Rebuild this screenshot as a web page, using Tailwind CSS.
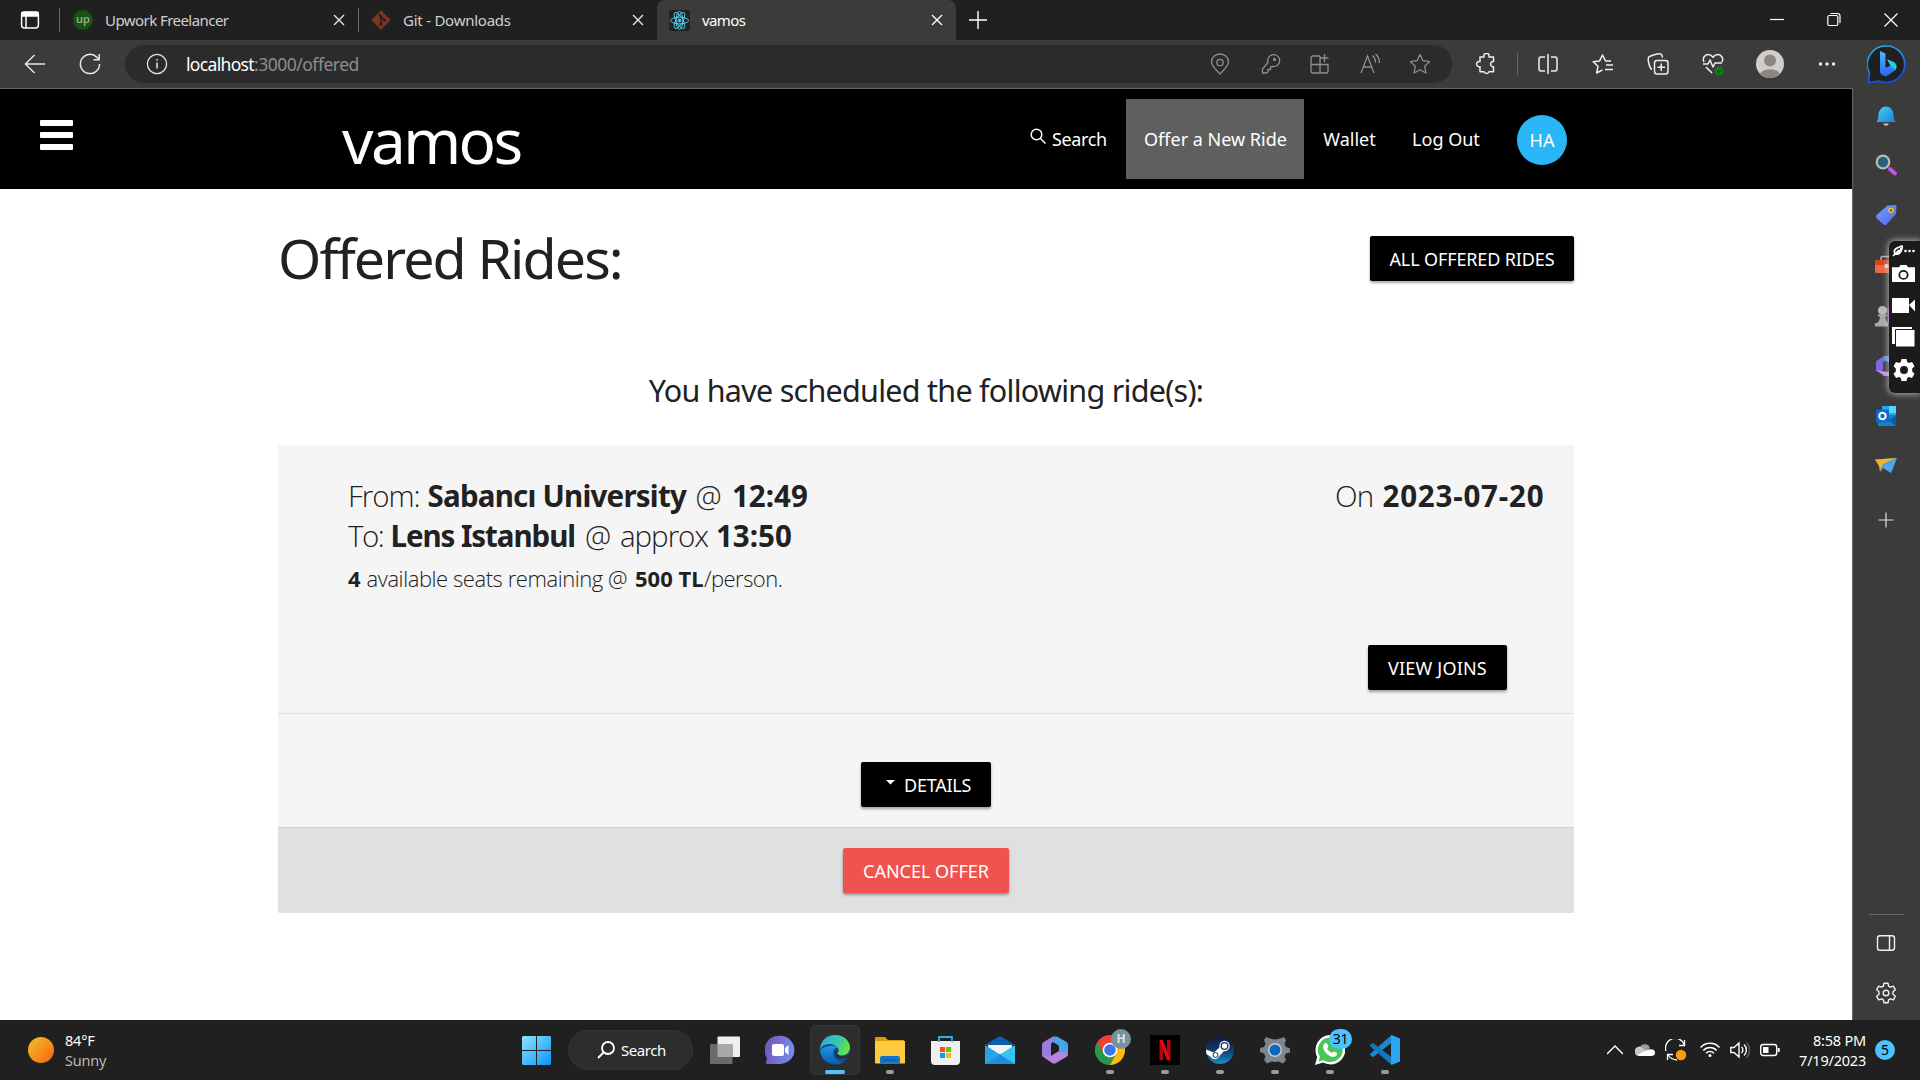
<!DOCTYPE html>
<html lang="en">
<head>
<meta charset="utf-8">
<title>vamos</title>
<script src="https://cdn.jsdelivr.net/npm/@tailwindcss/browser@4"></script>
</head>
<body class="w-[1920px] h-[1080px] overflow-hidden bg-white font-['Noto_Sans','Open_Sans',sans-serif] whitespace-nowrap">
<div class="relative flex h-[1080px] w-[1920px] flex-col">

<!-- Tab strip -->
<div class="flex h-10 shrink-0 items-center bg-[#202020] text-[15px] leading-5 text-[#d0d0d0]">
  <svg class="ml-5 size-5 shrink-0" viewBox="0 0 20 20" fill="none" stroke="#fff" stroke-width="1.5"><rect x="1.6" y="2" width="16.8" height="16" rx="3"/><path d="M2 2.5h16v3.5H2z" fill="#fff"/><path d="M6 6v12"/></svg>
  <div class="ml-[19px] h-6 w-px bg-[#6a6a6a]"></div>
  <div class="flex w-[298px] items-center pl-[13px]">
    <div class="flex size-5 shrink-0 items-center justify-center rounded-full bg-[#14540f] text-[11px] leading-none text-[#97ab92]"><span class="-mt-[3px] font-semibold">up</span></div>
    <span class="-mt-px ml-3 w-[227px] tracking-[-0.037em]">Upwork Freelancer</span>
    <svg class="size-[14px] shrink-0" viewBox="0 0 14 14" stroke="#e8e8e8" stroke-width="1.4"><path d="M2 2l10 10M12 2L2 12"/></svg>
  </div>
  <div class="h-6 w-px bg-[#6a6a6a]"></div>
  <div class="flex w-[298px] items-center pl-3">
    <svg class="size-5 shrink-0" viewBox="0 0 20 20"><path d="M10 .3 19.7 10 10 19.7.3 10z" fill="#7b3426"/><path d="M7.5 3.5l2.5 3v9M10 7l4 3.5" stroke="#202020" stroke-width="1.4" fill="none"/><circle cx="10" cy="7" r="1.5" fill="#202020"/><circle cx="10" cy="14" r="1.6" fill="#202020"/><circle cx="13.7" cy="10.3" r="1.5" fill="#202020"/></svg>
    <span class="-mt-px ml-3 w-[228px] tracking-[-0.016em]">Git - Downloads</span>
    <svg class="size-[14px] shrink-0" viewBox="0 0 14 14" stroke="#e8e8e8" stroke-width="1.4"><path d="M2 2l10 10M12 2L2 12"/></svg>
  </div>
  <div class="flex h-10 w-[299px] items-center rounded-t-lg bg-[#3b3b3b] pl-3 text-white">
    <svg class="size-[21px] shrink-0" viewBox="0 0 20 20" fill="none" stroke="#5cc8e4" stroke-width=".9"><rect width="20" height="20" rx="2" fill="#222" stroke="none"/><ellipse cx="10" cy="10" rx="8.6" ry="3.2" transform="rotate(90 10 10)" /><ellipse cx="10" cy="10" rx="8.6" ry="3.2"/><ellipse cx="10" cy="10" rx="8.6" ry="3.2" transform="rotate(60 10 10)"/><ellipse cx="10" cy="10" rx="8.6" ry="3.2" transform="rotate(120 10 10)"/><circle cx="10" cy="10" r="1.4" fill="#5cc8e4"/></svg>
    <span class="-mt-px ml-3 w-[228px] tracking-[-0.04em]">vamos</span>
    <svg class="size-[14px] shrink-0" viewBox="0 0 14 14" stroke="#fff" stroke-width="1.4"><path d="M2 2l10 10M12 2L2 12"/></svg>
  </div>
  <svg class="ml-3 size-5 shrink-0" viewBox="0 0 20 20" stroke="#fff" stroke-width="1.4"><path d="M10 1v18M1 10h18"/></svg>
  <div class="ml-auto flex items-center pr-[22px]">
    <svg class="w-[14px] h-5" viewBox="0 0 14 20" stroke="#fff" stroke-width="1.2"><path d="M0 9.5h14"/></svg>
    <svg class="ml-[43px] w-[14px] h-5" viewBox="0 0 14 20" fill="none" stroke="#fff" stroke-width="1.2"><rect x=".8" y="5.5" width="10" height="10" rx="1.5"/><path d="M3.500 3.500h7q2.500 0 2.500 2.500v7"/></svg>
    <svg class="ml-[43px] w-[14px] h-5" viewBox="0 0 14 20" stroke="#fff" stroke-width="1.2"><path d="M.5 3.500l13 13M13.500 3.500l-13 13"/></svg>
  </div>
</div>

<!-- Address toolbar -->
<div class="flex h-12 shrink-0 items-center bg-[#3b3b3b]">
  <svg class="ml-6 size-[22px] shrink-0" viewBox="0 0 22 22" fill="none" stroke="#e6e6e6" stroke-width="1.5"><path d="M21 11H2M10.500 2L1.500 11l9 9"/></svg>
  <svg class="ml-[33px] size-[22px] shrink-0" viewBox="0 0 22 22" fill="none" stroke="#e6e6e6" stroke-width="1.5"><path d="M20.600 11a9.600 9.600 0 1 1-2.900-6.900L20 6.500M20.200 1v5.800h-5.800"/></svg>
  <div class="ml-6 flex h-[38px] w-[1327px] items-center rounded-full bg-[#2b2b2b]">
    <svg class="ml-[21px] size-[22px] shrink-0" viewBox="0 0 22 22" fill="none" stroke="#e6e6e6" stroke-width="1.3"><circle cx="11" cy="11" r="9.600"/><path d="M11 9.500v6M11 6v1.600" stroke-width="1.500"/></svg>
    <div class="ml-[18px] w-[1023px] shrink-0 text-[17.500px] leading-6 text-[#8e8e8e]"><span class="tracking-[-0.038em] text-white">localhost</span><span class="tracking-[-0.028em]">:3000/offered</span></div>
    <div class="flex shrink-0 items-center gap-7 text-[#8f8f8f]">
      <svg class="size-[22px]" viewBox="0 0 22 22" fill="none" stroke="currentColor" stroke-width="1.300"><path d="M11 21C6 16 2.500 12.500 2.500 9a8.500 8 0 0 1 17 0c0 3.500-3.500 7-8.500 12z"/><circle cx="11" cy="9.500" r="3.200"/></svg>
      <svg class="size-[22px]" viewBox="0 0 22 22" fill="none" stroke="currentColor" stroke-width="1.300"><path d="M8.500 10.500a6 6 0 1 1 4.500 4l-2 .5v2.500H8.500V20L7 21H3v-4z" transform="translate(.5 -1)"/><circle cx="15.500" cy="6.500" r="1"/></svg>
      <svg class="size-[22px]" viewBox="0 0 22 22" fill="none" stroke="currentColor" stroke-width="1.300"><path d="M11 3H4a2 2 0 0 0-2 2v13a2 2 0 0 0 2 2h13a2 2 0 0 0 2-2v-6.500H2M11 3v17M15.500 1v8M11.500 5h8"/></svg>
      <svg class="size-[22px]" viewBox="0 0 22 22" fill="none" stroke="currentColor" stroke-width="1.300"><path d="M2 20L8.500 3 15 20M4.300 14h8.400M13.500 2.500a9 9 0 0 1 3 7M16.500 1a12 12 0 0 1 4 9"/></svg>
      <svg class="size-[22px]" viewBox="0 0 22 22" fill="none" stroke="currentColor" stroke-width="1.300" stroke-linejoin="round"><path d="M11 1.500l2.900 6.200 6.800.9-5 4.700 1.300 6.700-6-3.300L5 20l1.300-6.700-5-4.700 6.800-.9z"/></svg>
    </div>
  </div>
  <svg class="ml-6 size-[22px] shrink-0" viewBox="0 0 22 22" fill="none" stroke="#f0f0f0" stroke-width="1.500" stroke-linejoin="round"><path d="M4 4h4a2.700 2.700 0 1 1 5 0h4.500v4.500h-1a2.700 2.700 0 0 0 0 5.200h1v5H13a2.700 2.700 0 0 1-5 0H4v-5a2.700 2.700 0 1 1 0-5.200z"/></svg>
  <div class="ml-[19px] h-[22px] w-px bg-[#6a6a6a]"></div>
  <div class="ml-[19px] flex shrink-0 items-center gap-[33px]">
    <svg class="size-[22px]" viewBox="0 0 22 22" fill="none" stroke="#f0f0f0" stroke-width="1.500"><path d="M8 4H4a2 2 0 0 0-2 2v10a2 2 0 0 0 2 2h4M14 4h4a2 2 0 0 1 2 2v10a2 2 0 0 1-2 2h-4M11 1v20"/></svg>
    <svg class="size-[22px]" viewBox="0 0 22 22" fill="none" stroke="#f0f0f0" stroke-width="1.500" stroke-linejoin="round"><path d="M19 8h-5.500L10.500 2 7.600 7.900l-6.400.9L6 13.200 4.700 20l5.800-3.100M14 12h7M13 16.500h8"/></svg>
    <svg class="size-[22px]" viewBox="0 0 22 22" fill="none" stroke="#f0f0f0" stroke-width="1.500"><rect x="7.500" y="7.500" width="13.500" height="13.500" rx="2.500"/><path d="M14.200 10.500v7.500M10.500 14.200H18M4.800 16.500C2.500 15 .5 6.500 1.500 4.500S12 0 14 1.200c.8.600 1.300 2 1.500 3.300"/></svg>
    <svg class="size-[22px]" viewBox="0 0 22 22" fill="none" stroke="#f0f0f0" stroke-width="1.500" stroke-linejoin="round"><path d="M2 9C0 5 3 1.500 6 1.500c2.500 0 4 1.300 5 2.700 1-1.400 2.500-2.700 5-2.700 3 0 6 3.500 4 7.500M1 11h5l2-4 3 7 2-4h7M4 14l6 6"/><circle cx="17" cy="18" r="4.500" fill="#137a1b" stroke="none"/><path d="M15 18l1.500 1.500L19 16.800" stroke="#0b4d10" stroke-width="1.200"/></svg>
  </div>
  <svg class="ml-8 size-7 shrink-0" viewBox="0 0 28 28"><circle cx="14" cy="14" r="14" fill="#d0cecb"/><circle cx="14" cy="10.500" r="6" fill="#8b8680"/><path d="M4 24a10.500 7 0 0 1 20 0 14 14 0 0 1-20 0z" fill="#8b8680"/></svg>
  <svg class="ml-[34px] h-5 w-[18px] shrink-0" viewBox="0 0 18 20" fill="#f0f0f0"><circle cx="2.500" cy="10" r="1.700"/><circle cx="9" cy="10" r="1.700"/><circle cx="15.500" cy="10" r="1.700"/></svg>
</div>

<!-- Page and Edge sidebar -->
<div class="flex h-[932px] shrink-0">
  <div class="w-[1852px] border-t border-[#666]">
    <nav class="flex h-[100px] bg-black text-[18px] text-white">
      <div class="ml-10 mt-[31px] flex h-[30px] w-[33px] flex-col justify-between">
        <div class="h-[6px] rounded-[1px] bg-white"></div><div class="h-[6px] rounded-[1px] bg-white"></div><div class="h-[6px] rounded-[1px] bg-white"></div>
      </div>
      <div class="ml-[269px] w-[669px] text-[62px] leading-[103px] tracking-[-0.041em]">vamos</div>
      <div class="mt-2.5 flex h-20 items-center leading-[80px]">
        <div class="flex w-[115px] items-center pl-[19px]">
          <svg class="-mt-1.5 size-4 shrink-0" viewBox="0 0 16 16" fill="none" stroke="#fff" stroke-width="1.500"><circle cx="6.500" cy="6.500" r="5.300"/><path d="M10.500 10.500L15.500 15.500"/></svg>
          <span class="ml-[6px] tracking-[-0.02em]">Search</span>
        </div>
        <div class="w-[178px] bg-[#5f5f5f] pl-[1px] text-center">Offer a New Ride</div>
        <div class="w-[89px] pl-[2px] text-center">Wallet</div>
        <div class="w-[104px] pl-[2px] text-center">Log Out</div>
        <div class="mt-[2px] ml-5 size-[50px] rounded-full bg-[#29b6f6] text-center leading-[51px]">HA</div>
      </div>
    </nav>
    <main class="ml-[278px] w-[1296px] text-[#212121]">
      <div class="flex h-[134px] items-start justify-between pt-[47px]">
        <h2 class="text-[55.500px] leading-[43px] font-[370] tracking-[-0.034em]">Offered Rides:</h2>
        <div class="h-[45px] w-[204px] rounded-xs bg-black text-center text-[18px] leading-[46px] tracking-[-0.007em] text-white shadow-[0_2px_3px_rgba(0,0,0,0.35)]">ALL OFFERED RIDES</div>
      </div>
      <h4 class="h-[122px] pt-[45px] text-center text-[30.500px] leading-[45px] tracking-[-0.024em]">You have scheduled the following ride(s):</h4>
      <section class="h-[468px] rounded-xs bg-[#f5f5f5]">
        <div class="flex h-[269px] justify-between border-b border-[#e0e0e0] pl-[70px]">
          <div class="pt-[31px] text-[29.500px] leading-[40px]">
            <div class="flex font-['Open_Sans'] font-light">
              <span class="w-[79.500px] tracking-[-0.035em]">From:</span><b class="w-[268px] font-['Noto_Sans'] font-bold tracking-[-0.026em]">Sabancı University</b><span class="w-[36.500px]">@</span><b class="font-['Noto_Sans'] font-bold">12:49</b>
            </div>
            <div class="flex font-['Open_Sans'] font-light">
              <span class="w-[42.500px] tracking-[-0.050em]">To:</span><b class="w-[194.500px] font-['Noto_Sans'] font-bold tracking-[-0.036em]">Lens Istanbul</b><span class="w-[35px]">@</span><span class="w-[96px] tracking-[-0.035em]">approx</span><b class="font-['Noto_Sans'] font-bold">13:50</b>
            </div>
            <div class="flex pt-px font-['Open_Sans'] text-[22px] leading-[42px] font-light">
              <b class="w-[18.500px] font-['Noto_Sans'] font-bold">4</b><span class="w-[268.500px] tracking-[-0.020em]">available seats remaining @</span><b class="w-[69px] font-['Noto_Sans'] font-bold">500 TL</b><span class="tracking-[-0.024em]">/person.</span>
            </div>
          </div>
          <div class="flex flex-col justify-between pt-[31px] pb-[23px]">
            <div class="flex w-[239px] text-[29.500px] leading-[40px]"><span class="w-[47.500px] font-['Open_Sans'] font-light tracking-[-0.030em]">On</span><b class="font-bold tracking-[0.027em]">2023-07-20</b></div>
            <div class="ml-[33px] h-[45px] w-[139px] rounded-xs bg-black text-center text-[18px] leading-[46px] tracking-[0.01em] text-white shadow-[0_2px_3px_rgba(0,0,0,0.35)]">VIEW JOINS</div>
          </div>
        </div>
        <div class="flex h-[113px] justify-center pt-12">
          <div class="flex h-[45px] w-[130px] items-center rounded-xs bg-black pl-[25px] text-[18px] leading-[45px] tracking-[-0.013em] text-white shadow-[0_2px_3px_rgba(0,0,0,0.35)]"><svg class="-mt-[5px] mr-[9px] h-[5px] w-[9px]" viewBox="0 0 9 5"><path d="M0 0h9L4.500 4.500z" fill="#fff"/></svg><span class="pt-px">DETAILS</span></div>
        </div>
        <div class="flex h-[86px] justify-center rounded-b-xs border-t border-[#d2d2d2] bg-[#e0e0e0] pt-5">
          <div class="h-[45px] w-[166px] rounded-xs bg-[#ef5350] text-center text-[18px] leading-[46px] text-white shadow-[0_2px_3px_rgba(0,0,0,0.35)]">CANCEL OFFER</div>
        </div>
      </section>
    </main>
  </div>

  <aside class="flex w-[68px] flex-col items-center border-l border-[#666] bg-[#3b3b3b] pt-[17px] pr-px">
    <svg class="size-[22px]" viewBox="0 0 22 22"><defs><linearGradient id="bell" x2="1" y2="1"><stop stop-color="#45d2f7"/><stop offset="1" stop-color="#1b7fe0"/></linearGradient></defs><path d="M3.500 10a7.500 8.500 0 0 1 15 0l.5 4 1.500 3h-19L3 14z" fill="url(#bell)"/><path d="M8 18.500h6q-3 4.500-6 0z" fill="#c9c9c9"/></svg>
    <svg class="mt-[27px] size-[22px]" viewBox="0 0 22 22"><path d="M15 15l5 4.500" stroke="#c452ea" stroke-width="4" stroke-linecap="round"/><circle cx="8" cy="8" r="6.300" fill="#27607e" stroke="#bcb8b4" stroke-width="2.200"/></svg>
    <svg class="mt-[28px] size-[22px]" viewBox="0 0 22 22"><defs><linearGradient id="tag" x2="1" y2="1"><stop stop-color="#6fa2ff"/><stop offset="1" stop-color="#5561ec"/></linearGradient></defs><path d="M12.500 1.500L20 1q1.500 0 1.500 1.500l-.5 7.500-9.500 10.500q-1.500 1-3 0L1.500 14q-1.200-1.500 0-3z" fill="url(#tag)"/><circle cx="16" cy="6.500" r="2.700" fill="#f5c514"/><circle cx="16" cy="6.500" r="1.200" fill="#555"/></svg>
    <svg class="mt-[29px] size-[22px]" viewBox="0 0 22 22"><path d="M6 7V3q0-1.500 1.500-1.500h8V7" fill="none" stroke="#b4b4b4" stroke-width="1.500"/><rect y="5" width="22" height="13" rx="1.500" fill="#f0663f"/><rect y="5" width="22" height="5" fill="#d4451c"/><circle cx="11.500" cy="11" r="2.300" fill="#d4d4d4"/></svg>
    <svg class="mt-[28px] size-[22px]" viewBox="0 0 22 22"><path d="M12 3l5-2v18h-4z" fill="#9c4fd0"/><circle cx="7.500" cy="5.500" r="4.500" fill="#b8b8b8"/><path d="M3 9.500h9v2H10q.5 4 3 6.500v3.500H0V18h2.500q2.500-2.500 2.500-6.500H3z" fill="#a8a8a8"/></svg>
    <svg class="mt-[28px] size-[22px]" viewBox="0 0 22 22"><path d="M9 1L2 5.500Q1 6.200 1 7.500V16l4 1 3-2V7l6-4z" fill="#7b67df"/><path d="M9 1h4l8 5v8l-6-3V8L9 5z" fill="#4c9ce8"/><path d="M1 15l8 6h4l8-5v-3l-8 4z" fill="#c08de0"/></svg>
    <svg class="mt-[28px] size-[22px]" viewBox="0 0 22 22"><path d="M7 1h14v15H7z" fill="#2aa7ea"/><path d="M14 1h7v7h-7z" fill="#50d9ff"/><path d="M3 10l18 0v11H3z" fill="#1283d0"/><path d="M21 10l-7 5.500 7 5.500z" fill="#0a5ea8"/><rect x="1" y="4.500" width="13" height="13" rx="1" fill="#0f6cc4"/><circle cx="7.500" cy="11" r="3.200" fill="none" stroke="#fff" stroke-width="2"/></svg>
    <svg class="mt-[28px] size-[22px]" viewBox="0 0 22 22"><path d="M0 4.500L22 3 6 12z" fill="#3ba4e8"/><path d="M0 4.500L22 3 8 9l-3 8-1-6z" fill="#f3b51d"/><path d="M22 3L16 18l-8-5-2 4 1-6z" fill="#4aa8f2"/></svg>
    <svg class="mt-[35px] size-4" viewBox="0 0 16 16" stroke="#e0e0e0" stroke-width="1.200"><path d="M8 .5v15M.5 8h15"/></svg>
    <div class="mt-auto h-px w-[35px] bg-[#6a6a6a]"></div>
    <svg class="mt-[17px] size-[22px]" viewBox="0 0 22 22" fill="none" stroke="#f0f0f0" stroke-width="1.400"><rect x="2.500" y="3.800" width="17" height="14.500" rx="2.500"/><path d="M14.500 4v14"/></svg>
    <svg class="mt-[28px] mb-[16px] size-[22px]" viewBox="0 0 22 22" fill="none" stroke="#f0f0f0" stroke-width="1.400" stroke-linejoin="round"><path d="M9 1.200h4l.6 3 1.800 1 2.900-1 2 3.500-2.300 2v2.600l2.300 2-2 3.500-2.900-1-1.800 1-.6 3H9l-.6-3-1.800-1-2.900 1-2-3.500 2.300-2V9.700l-2.300-2 2-3.500 2.900 1 1.800-1z"/><circle cx="11" cy="11" r="2.800"/></svg>
  </aside>
</div>

<!-- Taskbar -->
<div class="flex h-[60px] shrink-0 items-center bg-[#202020] text-white">
  <div class="ml-7 size-[26px] rounded-full bg-linear-to-br from-[#efc12d] to-[#f2600c]"></div>
  <div class="ml-[11px] w-[443px] text-[14.500px] leading-5 tracking-[-0.014em]"><div>84°F</div><div class="text-[#b8b8b8]">Sunny</div></div>
  <svg class="ml-[14px] size-[29px] shrink-0" viewBox="0 0 29 29"><defs><linearGradient id="win" x2="1" y2="1"><stop stop-color="#8ae4ff"/><stop offset="1" stop-color="#0a94f8"/></linearGradient></defs><path d="M1 0h13v14H0V1zM15 0h13l1 1v13H15zM0 15h14v14H1l-1-1zM15 15h14v13l-1 1H15z" fill="url(#win)"/></svg>
  <div class="ml-[17px] flex h-10 w-[125px] shrink-0 items-center rounded-full border border-[#343434] bg-[#2d2d2d] pl-[28px]">
    <svg class="size-[18px]" viewBox="0 0 18 18" fill="none" stroke="#fff" stroke-width="1.800"><circle cx="11" cy="7" r="6"/><path d="M6.500 11.500L1 17"/></svg>
    <span class="ml-[6px] text-[15px] tracking-[-0.030em]">Search</span>
  </div>
  <div class="ml-[4.500px] grid h-[60px] w-[715px] shrink-0 grid-cols-13 items-center justify-items-center">
    <svg class="h-[28px] w-[30px]" viewBox="0 0 30 28"><rect x="7.500" y=".5" width="22.500" height="20.500" rx="1" fill="#efefef"/><rect y="8" width="22.500" height="20" rx="1" fill="#6b6b6b"/><path d="M7.500 8h15v13h-15z" fill="#a9a9a9"/></svg>
    <svg class="size-[30px]" viewBox="0 0 30 30"><defs><linearGradient id="chat" x1="0" y1=".4" x2="1" y2=".6"><stop stop-color="#7157b8"/><stop offset="1" stop-color="#7391ec"/></linearGradient></defs><path d="M15 .8A14.300 14 0 0 1 15 29L.8 29l1.200-6A14.300 14.300 0 0 1 15 .8z" fill="url(#chat)"/><rect x="7" y="9" width="12" height="12" rx="2" fill="#fff"/><path d="M20 13l3.500-3v10L20 17z" fill="#fff"/></svg>
    <div class="relative flex size-[50px] items-center justify-center rounded-[5px] border border-[#383838] bg-[#2d2d2d]">
      <svg class="size-[30px]" viewBox="0 0 30 30"><defs><linearGradient id="ed1" x2="1" y2=".3"><stop stop-color="#2aa7e0"/><stop offset=".6" stop-color="#36c6b8"/><stop offset="1" stop-color="#62e047"/></linearGradient><linearGradient id="ed2" x2="0" y2="1"><stop stop-color="#1b9be3"/><stop offset="1" stop-color="#0a59b2"/></linearGradient></defs><circle cx="15" cy="15" r="15" fill="#114a8b"/><path d="M0 15a15 11 0 0 1 19-3l-3 1q-3 1-3 5 1 8 10 9A15 15 0 0 1 0 15z" fill="url(#ed2)"/><path d="M0 14C1 5 7 0 15 0c9 0 15 6 15 12.500 0 5-4 8-8 8-3 0-5-1-4.500-2.500 1-1 1.500-2 1-4C17 9 5 6 0 14z" fill="url(#ed1)"/><path d="M17 15q-1 3 1 5 4 3 12-1-1 3-3 4-10 2-12-4 0-3 2-4z" fill="#2d2d2d"/></svg>
      <div class="absolute bottom-0 left-[14px] h-1 w-5 rounded-full bg-[#4cc2ff]"></div>
    </div>
    <div class="relative flex h-[50px] w-[30px] items-center">
      <svg class="h-[28px] w-[30px]" viewBox="0 0 30 28"><path d="M0 2q0-1 1-1h9l3 3h16v6H0z" fill="#dd9c05"/><path d="M0 5h30v22q0 .5-1 .5H1q-1 0-1-1z" fill="#fccb3f"/><path d="M5 27.500V22q0-2 2-2h16q2 0 2 2v5.500z" fill="#1575c8"/><path d="M8 24h14" stroke="#0b4f92"/></svg>
      <div class="absolute bottom-px left-[11px] h-1 w-2 rounded-full bg-[#9b9b9b]"></div>
    </div>
    <svg class="size-[29px]" viewBox="0 0 29 29"><path d="M0 5h29v20q0 4-4 4H4q-4 0-4-4z" fill="#efefef"/><path d="M8 6V1h13v5" fill="none" stroke="#29b2e8" stroke-width="1.800"/><path d="M9 11h5v5H9z" fill="#f25022"/><path d="M15 11h5v5h-5z" fill="#7fba00"/><path d="M9 17h5v5H9z" fill="#00a4ef"/><path d="M15 17h5v5h-5z" fill="#ffb900"/></svg>
    <svg class="h-[28px] w-[30px]" viewBox="0 0 30 28"><path d="M0 9L15 0l15 9z" fill="#0b5eae"/><path d="M3 9h24v9H3z" fill="#f2f2f2"/><path d="M0 9l30 19H0z" fill="#28a3ea"/><path d="M30 9v19H0z" fill="#37c4f2"/><path d="M0 28l15-9.500L30 28z" fill="#1c8fe0"/></svg>
    <svg class="size-[28px]" viewBox="0 0 28 28"><path d="M12 .5L2.500 6Q1 7 1 9v10.500l6 3 3-2V9q0-2 2-3l4-3z" fill="#9a7ce2"/><path d="M12 .5h4l9.500 5.500Q27 7 27 9v9q0 1-1 2l-8-5v-4q0-1-1-2l-5-3z" fill="#45a5ea"/><path d="M1 20l10 7q2 1 4 0l11-6.500q1-1 1-3l-9-2.500-9 5.500z" fill="#b785db"/></svg>
    <div class="relative flex h-[50px] w-[30px] items-center">
      <svg class="size-[30px]" viewBox="0 0 30 30"><circle cx="15" cy="15" r="15" fill="#ea4335"/><path d="M2 7.500A15 15 0 0 0 15 30l7-11-13 0z" fill="#279847"/><path d="M15 30A15 15 0 0 0 28.500 8.500H15l6.500 10z" fill="#fbbc0a"/><circle cx="15" cy="15" r="7.300" fill="#fff"/><circle cx="15" cy="15" r="5.800" fill="#3b78e7"/></svg>
      <div class="absolute top-1 left-[16px] size-5 rounded-full bg-[#76909c] text-center text-[12px] leading-5 font-bold text-[#dbe3e6]">H</div>
      <div class="absolute bottom-px left-[11px] h-1 w-2 rounded-full bg-[#9b9b9b]"></div>
    </div>
    <div class="relative flex h-[50px] w-[30px] items-center">
      <svg class="size-[30px]" viewBox="0 0 30 30"><path d="M0 0h30v30H0z" fill="#000"/><path d="M9.500 5h3.500v20l-3.500.5zM17 5h3.500v20.500L17 25z" fill="#b1060f"/><path d="M9.500 5H13l7.500 20.500L17 25z" fill="#e50914"/></svg>
      <div class="absolute bottom-px left-[11px] h-1 w-2 rounded-full bg-[#9b9b9b]"></div>
    </div>
    <div class="relative flex h-[50px] w-[30px] items-center">
      <svg class="size-[30px]" viewBox="0 0 30 30"><defs><linearGradient id="st" x2="0" y2="1"><stop stop-color="#15183b"/><stop offset=".5" stop-color="#0e3c6c"/><stop offset="1" stop-color="#1391c6"/></linearGradient></defs><circle cx="15" cy="15" r="14" fill="url(#st)"/><path d="M1 14.500l8 3 5.500-5 5-6 5 5-5.500 4.500-5 5.500a4.500 4.500 0 0 1-8 .5L1.500 19z" fill="#fff"/><circle cx="19.500" cy="11" r="5.200" fill="#fff"/><circle cx="19.500" cy="11" r="3.300" fill="#fff" stroke="#15345e" stroke-width="1.300"/><circle cx="10.500" cy="20" r="2.500" fill="#fff" stroke="#15345e"/></svg>
      <div class="absolute bottom-px left-[11px] h-1 w-2 rounded-full bg-[#9b9b9b]"></div>
    </div>
    <div class="relative flex h-[50px] w-[30px] items-center">
      <svg class="size-[30px]" viewBox="0 0 30 30"><path d="M6 2l4 1.500L12 4l3 .500 3-.500 2-.500L24 2l2 3-1.500 4 1.500 3 4 1.500v4L26 18.500l-1.500 3L26 25l-3 3.500-4.500-2L15 27l-3.500-.5-4.500 2L4 25l1.500-3.500L4 18.500l-4-1.500v-4l4-1 1.500-3L4 5z" fill="#7d858d"/><circle cx="15" cy="15" r="7" fill="#c9ced3"/><circle cx="15" cy="15" r="5.500" fill="#0f67b7"/></svg>
      <div class="absolute bottom-px left-[11px] h-1 w-2 rounded-full bg-[#9b9b9b]"></div>
    </div>
    <div class="relative flex h-[50px] w-[30px] items-center">
      <svg class="size-[30px]" viewBox="0 0 30 30"><path d="M15 0a15 14.700 0 1 1-7 27.500L0 30l2.200-8A15 15 0 0 1 15 0z" fill="#fff"/><path d="M15 2.500a12.500 12.300 0 1 1-6.500 22.700L3.500 26.500 5 22A12.500 12.500 0 0 1 15 2.500z" fill="#45c655"/><path d="M9.500 8.500q1-1.500 2.500 0l1.300 3-1.300 2q1.500 3 5 4.500l1.700-1.800 3.300 1.800q.5 3.500-3.500 4C13 22 7.500 15 8 11q.5-1.500 1.500-2.500z" fill="#fff"/></svg>
      <div class="absolute top-1 left-[14px] h-5 w-[23px] rounded-full bg-[#4cc2ff] text-center text-[14px] leading-5 tracking-tight text-black">31</div>
      <div class="absolute bottom-px left-[11px] h-1 w-2 rounded-full bg-[#9b9b9b]"></div>
    </div>
    <div class="relative flex h-[50px] w-[30px] items-center">
      <svg class="size-[30px]" viewBox="0 0 30 30"><path d="M22 7.500L3.500 21.800q-1 .6-1.800-.2l-1.400-1.600q-.6-.8.200-1.600L21 .5z" fill="#1b88cf"/><path d="M22 22.500L3.500 8.200q-1-.6-1.800.2L.3 10q-.6.800.2 1.600L21 29.500z" fill="#1176bb"/><path d="M21.500 0L30 3.500v23L21.500 30q-.5-.3-.5-1V1q0-.7.500-1z" fill="#2aa5f2"/></svg>
      <div class="absolute bottom-px left-[11px] h-1 w-2 rounded-full bg-[#9b9b9b]"></div>
    </div>
  </div>

  <div class="ml-auto flex shrink-0 items-center pr-[25px]">
    <svg class="h-5 w-4" viewBox="0 0 16 20" fill="none" stroke="#fff" stroke-width="1.400"><path d="M0 14l8-8 8 8"/></svg>
    <svg class="ml-3 size-5" viewBox="0 0 20 20"><path d="M5 7.500a5.300 5.300 0 0 1 10 .5l-5 4z" fill="#9b9b9b"/><path d="M0 12.500A4.500 4.500 0 0 1 7.500 8L14 12l-9 4q-5 0-5-3.500z" fill="#c8c8c8"/><path d="M2 15L13.500 9.500Q20 8.500 20 12.800q0 3.200-4 3.200H5z" fill="#fff"/></svg>
    <svg class="ml-[10px] size-[22px]" viewBox="0 0 22 22" fill="none" stroke="#fff" stroke-width="1.300"><path d="M1 12A9.500 9.500 0 0 1 19.500 6M19.500 1v5.500H14M2.500 21v-5.500H8M3 16q3 4.500 9 5"/><circle cx="16" cy="16" r="5.200" fill="#ff9a0c" stroke="none"/></svg>
    <svg class="ml-[13px] size-5" viewBox="0 0 20 20" fill="none" stroke="#fff" stroke-width="1.500"><path d="M.5 7.500a13 13 0 0 1 19 0M3.300 10.500a9 9 0 0 1 13.400 0M6 13.300a5.500 5.500 0 0 1 8 0"/><circle cx="10" cy="15.500" r="1.500" fill="#fff" stroke="none"/></svg>
    <svg class="ml-[10px] size-5" viewBox="0 0 20 20" fill="none" stroke="#fff" stroke-width="1.400"><path d="M.8 7.500H4L9 3v14l-5-4.500H.8zM11.500 7a4 4 0 0 1 0 6M14 4.500a7.500 7.500 0 0 1 0 11"/><path d="M16.500 2.500a10.500 10.500 0 0 1 0 15" stroke="#5c5c5c"/></svg>
    <svg class="ml-[10px] size-5" viewBox="0 0 20 20" fill="none" stroke="#fff" stroke-width="1.400"><rect x=".7" y="4.500" width="16" height="11" rx="2.500"/><path d="M3 7h5.500v6H3z" fill="#fff" stroke="none"/><path d="M18.700 8v4" stroke-width="2"/></svg>
    <div class="w-[86px] text-right text-[14.500px] leading-5 tracking-[-0.015em]"><div>8:58 PM</div><div>7/19/2023</div></div>
    <div class="ml-[9px] size-5 rounded-full bg-[#4cc2ff] text-center text-[14px] leading-5 text-black">5</div>
  </div>
</div>

<!-- Bing button overlapping toolbar and sidebar -->
<svg class="absolute top-[45px] left-[1867px] h-[39px] w-[39px]" viewBox="0 0 39 39"><defs><linearGradient id="bg1" x2=".3" y2="1"><stop stop-color="#22b7ee"/><stop offset="1" stop-color="#1a4be0"/></linearGradient><linearGradient id="bg2" x2="0" y2="1"><stop stop-color="#4fb8ff"/><stop offset="1" stop-color="#2b61f5"/></linearGradient></defs><path d="M19.500 1a18 18 0 0 1 0 36.500q-4 0-7.500-1.500-5 1-10.500 1.500L2.500 28A18.400 18.400 0 0 1 19.500 1z" fill="#202020" stroke="url(#bg1)" stroke-width="1.700"/><path d="M13 6l5.500 2.500V23l5-2.500-3-5.500 7 3q3.500 3 .5 7.500l-9 6q-6-1-6-5z" fill="url(#bg2)"/><path d="M20 14l7.500 3.500q3.500 3 1 7.500l-5-4.500z" fill="#22d3d6"/></svg>

<!-- Floating capture widget -->
<div class="absolute top-[241px] left-[1889px] flex h-[152px] w-[31px] flex-col items-center rounded-l-md bg-[#1b1b1b] pr-[2px] shadow-[0_0_6px_1px_rgba(210,210,210,0.75)]">
  <svg class="mt-[4px] h-3 w-[23px]" viewBox="0 0 23 12"><path d="M3 9q-2-4 2-6l5-2q1 1-1 5-2 4-6 3zM5 7q3 1 4-4M1 11l6-6" stroke="#fff" fill="none" stroke-width="1.700"/><g fill="#fff"><circle cx="13.500" cy="6" r="1.300"/><circle cx="17.500" cy="6" r="1.300"/><circle cx="21.500" cy="6" r="1.300"/></g></svg>
  <svg class="mt-[8px] h-[17px] w-[23px]" viewBox="0 0 23 18" preserveAspectRatio="none"><path d="M0 2.500h7L8.500 0h6L16 2.500h7V18H0z" fill="#fff"/><circle cx="11.500" cy="10.500" r="4.200" fill="#fff" stroke="#1b1b1b" stroke-width="1.800"/></svg>
  <svg class="mt-[16px] h-[15px] w-[23px]" viewBox="0 0 23 15"><path d="M0 0h17v15H0zM17 7l6-5.500v12z" fill="#fff"/></svg>
  <svg class="mt-[14px] h-[20px] w-[23px]" viewBox="0 0 23 20"><path d="M0 0h20v17H0z" fill="#fff"/><path d="M3.500 2.500H23V20H3.500z" fill="#fff" stroke="#1b1b1b" stroke-width="1"/></svg>
  <svg class="mt-[12px] size-[22px]" viewBox="0 0 22 22"><path fill-rule="evenodd" d="M8.500 0h5l.7 3 1.800 1 3-1 2.500 4.200-2.300 2.200v3.200l2.300 2.200L19 19l-3-1-1.800 1-.7 3h-5l-.7-3L6 18l-3 1L.5 14.800l2.300-2.200V9.400L.5 7.200 3 3l3 1 1.800-1zM11 7a4 4 0 1 0 0 8 4 4 0 0 0 0-8z" fill="#fff"/></svg>
</div>
</div>
</body>
</html>
